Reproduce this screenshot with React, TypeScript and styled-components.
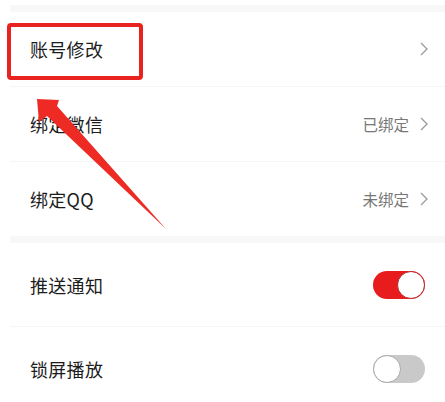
import React from 'react';
import styled, {createGlobalStyle} from "styled-components";

const GlobalStyle = createGlobalStyle`
  html, body {
    margin: 0;
    padding: 0;
    background: #ffffff;
  }
  body {
    font-family: "Noto Sans CJK SC", "Noto Sans", sans-serif;
    color: #222222;
  }
`

type Item = { label: string; value?: string; kind: 'link' | 'switch'; on?: boolean }

const accountItems: Item[] = [
    {label: '账号修改', kind: 'link'},
    {label: '绑定微信', value: '已绑定', kind: 'link'},
    {label: '绑定QQ', value: '未绑定', kind: 'link'},
]

const playItems: Item[] = [
    {label: '推送通知', kind: 'switch', on: true},
    {label: '锁屏播放', kind: 'switch', on: false},
]

const Chevron = () => (
    <svg width="8" height="14" viewBox="0 0 8 14">
        <path d="M1 1 L7 7 L1 13" fill="none" stroke="#9a9a9a" strokeWidth="1.3"/>
    </svg>
)

const Group = ({items, rowHeight}: { items: Item[]; rowHeight: number }) => (
    <List>
        {items.map((item) => (
            <Row key={item.label} $height={rowHeight}>
                <Label>{item.label}</Label>
                {item.kind === 'link' ? (
                    <Trail>
                        {item.value && <Value>{item.value}</Value>}
                        <Chevron/>
                    </Trail>
                ) : (
                    <Switch $on={!!item.on}><Knob $on={!!item.on}/></Switch>
                )}
            </Row>
        ))}
    </List>
)

export default function App() {
    return (
        <Page>
            <GlobalStyle/>
            <Band/>
            <Group items={accountItems} rowHeight={74}/>
            <Band/>
            <Group items={playItems} rowHeight={83}/>

            <Highlight/>
            <Arrow width="445" height="402" viewBox="0 0 445 402">
                <polygon
                    points="37,99 59,100 57,106 166,229 47,116 39,122"
                    fill="#ee2a24"
                />
            </Arrow>
        </Page>
    );
}

const Page = styled.main`
  position: relative;
  width: 445px;
  height: 402px;
  overflow: hidden;
  padding-top: 5px;
  box-sizing: border-box;
  background: #ffffff;
`

const Band = styled.div`
  margin-left: 10px;
  height: 7px;
  background: #f8f8f8;
`

const List = styled.section`
  display: flex;
  flex-direction: column;
  margin-left: 10px;
`

const Row = styled.div<{ $height: number }>`
  display: flex;
  align-items: center;
  justify-content: space-between;
  height: ${p => p.$height}px;
  padding: 0 17px 0 20px;
  border-bottom: 1px solid #f6f6f6;

  &:last-child {
    border-bottom: none;
  }
`

const Label = styled.span`
  font-size: 18px;
  letter-spacing: 0.3px;
  color: #1c1c1c;
`

const Trail = styled.div`
  display: flex;
  align-items: center;
  gap: 11px;
`

const Value = styled.span`
  font-size: 15.5px;
  color: #777777;
`

const Switch = styled.div<{ $on: boolean }>`
  display: flex;
  align-items: center;
  justify-content: ${p => p.$on ? 'flex-end' : 'flex-start'};
  width: 52px;
  height: 28px;
  border-radius: 14px;
  background: ${p => p.$on ? '#e81c1c' : '#c9c9c9'};
  box-sizing: border-box;
  margin-right: 3px;
`

const Knob = styled.div<{ $on: boolean }>`
  width: 28px;
  height: 28px;
  border-radius: 50%;
  background: #ffffff;
  box-sizing: border-box;
  border: 1.5px solid ${p => p.$on ? '#b3262a' : '#a8a8a8'};
`

const Highlight = styled.div`
  position: absolute;
  left: 7px;
  top: 23px;
  width: 136px;
  height: 57px;
  box-sizing: border-box;
  border: 4px solid #e8231f;
  border-radius: 4px;
`

const Arrow = styled.svg`
  position: absolute;
  left: 0;
  top: 0;
  pointer-events: none;
`
